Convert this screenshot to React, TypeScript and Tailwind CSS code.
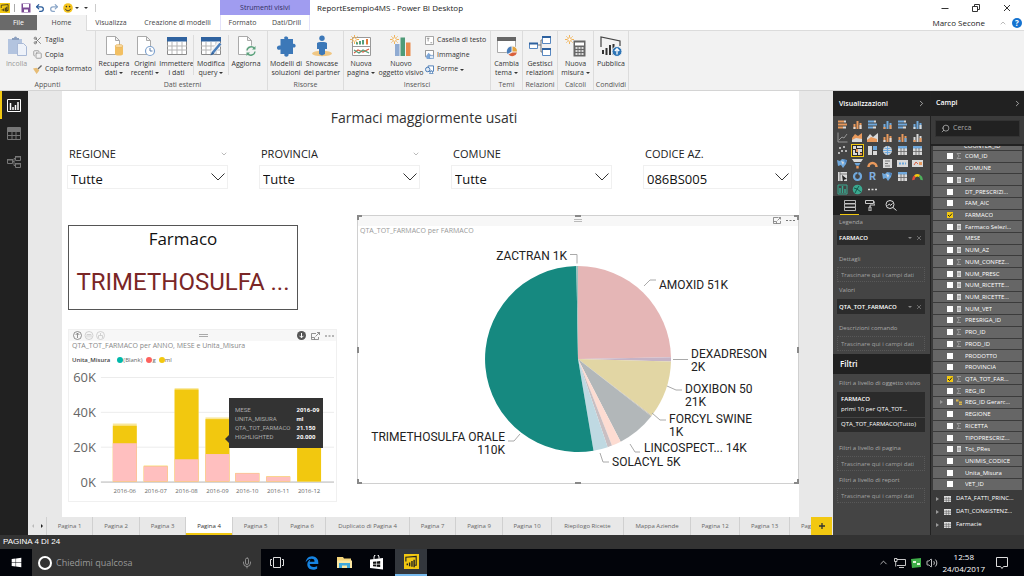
import React from "react";
import {
  ChevronDown,
  ChevronRight,
  ChevronUp,
  Copy,
  Mic,
  Redo2,
  Scissors,
  Search,
  Undo2,
  Volume2,
} from "lucide-react";
import { FaWindows } from "react-icons/fa";
import { FaEdgeLegacy } from "react-icons/fa6";

const BLUE = "#4a7ebb";

/* ---------- Ribbon icons ---------- */

function Ico({ children, className = "h-[22px] w-[22px]", box = "0 0 22 22" }: { children: React.ReactNode; className?: string; box?: string }) {
  return (
    <svg viewBox={box} className={`${className} shrink-0`} fill="none" aria-hidden="true">
      {children}
    </svg>
  );
}

const page = <path d="M3.5 1.500h9l4 4v14h-13z M12.500 1.500v4h4" fill="#fff" stroke="#aaa" />;
const sun = (
  <g stroke="#f0b45c" strokeWidth="1">
    <circle cx="4.500" cy="4.500" r="1.800" fill="#fff" />
    <path d="M4.500 0v2M4.500 7v2M0 4.500h2M7 4.500h2M1.400 1.400l1.200 1.200M6.400 6.400l1.200 1.200M1.400 7.600l1.200-1.200M6.400 2.600l1.200-1.200" />
  </g>
);

const icons = {
  paste: (
    <Ico>
      <path d="M2 4h14v15H2z" fill="#b3c4df" />
      <path d="M6 5V3h2a1.500 1.500 0 013 0h2v2z" fill="#8b9fbe" />
      <path d="M11.500 8.500h6l3 3v9h-9z" fill="#eef2f9" stroke="#a9b9d6" />
    </Ico>
  ),
  getData: (
    <Ico>
      {page}
      <path d="M12 11v8c0 2 8 2 8 0v-8z" fill="#f2bf62" />
      <ellipse cx="16" cy="11" rx="4" ry="1.600" fill="#f8d9a0" stroke="#dfa544" strokeWidth=".5" />
    </Ico>
  ),
  recent: (
    <Ico>
      {page}
      <circle cx="16" cy="16" r="4.500" fill="#fff" stroke="#7fa3cf" strokeWidth="1.200" />
      <path d="M16 13v3h2.500" stroke="#5b7fae" />
    </Ico>
  ),
  table: (
    <Ico>
      <path d="M1.500 2.500h19v17h-19z" fill="#fff" stroke="#8b8b8b" />
      <path d="M1 2h20v4.500H1z" fill="#2f629f" />
      <path d="M1 11h20M1 15h20M6 7v12M11 7v12M16 7v12" stroke="#b5b5b5" />
    </Ico>
  ),
  query: (
    <Ico>
      <path d="M1.500 2.500h19v17h-19z" fill="#fff" stroke="#8b8b8b" />
      <path d="M1 2h20v4.500H1z" fill="#2f629f" />
      <path d="M1 11h20M1 15h20M6 7v12M11 7v12M16 7v12" stroke="#b5b5b5" />
      <path d="M20 8l-8 10" stroke="#f2f2f2" strokeWidth="5" />
      <path d="M20.500 8.500l-7.500 9" stroke={BLUE} strokeWidth="2.600" />
      <path d="M12 16.500l-1.500 4 4-2z" fill="#2f629f" />
    </Ico>
  ),
  refresh: (
    <Ico>
      {page}
      <circle cx="16" cy="16" r="5.500" fill="#f2f2f2" />
      <path d="M12 15.500a4.200 4.200 0 017.500-2M20 16.500a4.200 4.200 0 01-7.500 2" stroke="#5ba27c" strokeWidth="1.400" />
      <path d="M20.500 11v3.500H17zM11.500 21v-3.500H15z" fill="#5ba27c" />
    </Ico>
  ),
  puzzle: (
    <Ico>
      <path
        d="M5.500 4h4C7.500.500 14.500.500 13 4h5v5c3-1.500 4 4.500 0 3.500V19h-4.500c1 3.500-5.500 3.500-4 0h-4v-4.500C1 16.500.500 9.500 5.500 10.500z"
        fill="#3c78b8"
      />
    </Ico>
  ),
  partner: (
    <Ico>
      <ellipse cx="11" cy="18.500" rx="10" ry="2.800" fill="#f0c784" />
      <circle cx="11" cy="3.200" r="2.700" fill="#3c78b8" />
      <path d="M6 8c0-1.500 10-1.500 10 0v6h-2v5l-3 1.500L8 19v-5H6z" fill="#3c78b8" />
    </Ico>
  ),
  newPage: (
    <Ico>
      <path d="M2.500 2.500h18v18h-18z" fill="#fff" stroke="#999" />
      <path d="M2.500 11.500h18" stroke="#999" />
      <path d="M7 9.500V7M10 9.500V6M13 9.500V5" stroke="#55a07c" strokeWidth="2" />
      <path d="M17 9.500V4" stroke="#e07b39" strokeWidth="2" />
      <path d="M4 18l4-3 5 2 6-3" stroke="#d95f43" strokeWidth="1.300" />
      <path d="M4 15l5 3 4-3 6 3" stroke="#55a07c" strokeWidth="1.300" />
      {sun}
    </Ico>
  ),
  newVisual: (
    <Ico>
      <path d="M5 9h4.500v12H5z" fill="#8fabd2" />
      <path d="M10.500 2.500H15V21h-4.500z" fill="#4f9b78" />
      <path d="M16 7.500h4.500V21H16z" fill="#ea8b4c" />
      {sun}
    </Ico>
  ),
  theme: (
    <Ico>
      <path d="M1.500 2.500h18v15h-18z" fill="#fff" stroke="#aaa" />
      <path d="M1 2h19v4H1z" fill="#666" />
      <circle cx="16" cy="16" r="5.500" fill="#f2f2f2" />
      <path d="M15.500 11.500v5l-4 2.500a5 5 0 014-7.500z" fill={BLUE} />
      <path d="M16.500 11.500a5 5 0 014.500 5h-4.500z" fill="#e5a43d" />
      <path d="M16.500 17.500H21a5 5 0 01-8.500 2z" fill="#d9603b" />
    </Ico>
  ),
  relations: (
    <Ico>
      <path d="M8 10h4M12 5v12M12 5h3M12 17h3" stroke="#777" />
      <g fill="#fff" stroke="#5787c0">
        <path d="M.500 8.500h8v5h-8zM13.500 1.500h8v7h-8zM13.500 13.500h8v7h-8z" />
      </g>
      <path d="M0 7.500h9v2H0zM13 1h9v2h-9zM13 13h9v2h-9z" fill="#2f629f" />
    </Ico>
  ),
  measure: (
    <Ico>
      <path d="M8.500 5.500h12v16h-12z" fill="#666" />
      <path d="M10 7.500h9v3h-9z" fill="#fff" />
      <path d="M10.500 13h8M10.500 16h8M10.500 19h8" stroke="#fff" strokeWidth="1.500" strokeDasharray="2 1" />
      {sun}
    </Ico>
  ),
  publish: (
    <Ico>
      <path d="M1 12V2l19 4v5" stroke="#444" strokeWidth="1.200" />
      <path d="M3 19v-4M6.500 20v-7M10 20V10M13.500 20V9" stroke="#333" strokeWidth="2" />
      <circle cx="17" cy="16.500" r="5" fill="#2e75b6" stroke="#f2f2f2" />
      <path d="M17 19.500v-5M14.800 16l2.200-2.300 2.200 2.300" stroke="#fff" strokeWidth="1.300" />
    </Ico>
  ),
};

const small = "h-[9px] w-[9px]";
const smallIcons = {
  format: (
    <Ico className={small} box="0 0 10 10">
      <path d="M0 4l4-1 3 3-3 4z" fill="#e7bd76" />
      <path d="M5 4l4-4 1 1-4 4z" fill="#666" />
    </Ico>
  ),
  textbox: (
    <Ico className={small} box="0 0 10 10">
      <path d="M.500.500h9v9h-9z" fill="#fff" stroke="#999" />
      <path d="M2 2.500h3M3.500 2.500V6M6 7.500h2" stroke="#777" strokeWidth=".8" />
    </Ico>
  ),
  image: (
    <Ico className={small} box="0 0 10 10">
      <path d="M.500.500h9v7h-9z" fill="#fff" stroke="#888" />
      <path d="M1 7l3-4 3 3v4H2z" fill="#7ea7d8" />
      <path d="M5 6h4.500v3.500H5z" fill="#dfe9f5" stroke="#5d8ac0" strokeWidth=".7" />
    </Ico>
  ),
  shapes: (
    <Ico className={small} box="0 0 10 10">
      <path d="M3.500 1h6v6h-6z" fill="#fff" stroke="#3f73b0" />
      <circle cx="3" cy="5" r="2.500" fill="#dfe9f5" stroke="#3f73b0" />
      <path d="M5 9.500l2-3.500 2 3.500z" fill="#fff" stroke="#3f73b0" strokeWidth=".8" />
    </Ico>
  ),
};

function Caret() {
  return <span className="ml-[2px] inline-block border-x-2 border-t-2 border-x-transparent border-t-[#333] align-middle" />;
}

function BigButton({ icon, a, b, caret, className, muted }: { icon: React.ReactNode; a: string; b?: string; caret?: boolean; className: string; muted?: boolean }) {
  return (
    <button className={`flex shrink-0 flex-col items-center whitespace-nowrap pt-[4px] leading-[9px] ${muted ? "text-[#999]" : "text-[#333]"} ${className}`}>
      {icon}
      <span className="pt-[2px]">{a}</span>
      {b && (
        <span>
          {b}
          {caret && <Caret />}
        </span>
      )}
    </button>
  );
}

function Group({ label, className, children }: { label: string; className: string; children: React.ReactNode }) {
  return (
    <section className={`flex shrink-0 flex-col border-r border-[#dcdcdc] ${className}`}>
      <div className="flex flex-1">{children}</div>
      <div className="h-[11px] text-center leading-[11px] text-[#555]">{label}</div>
    </section>
  );
}

function SmallButton({ icon, children, caret }: { icon: React.ReactNode; children: string; caret?: boolean }) {
  return (
    <button className="flex items-center gap-[3px] whitespace-nowrap text-[#333]">
      {icon}
      <span>
        {children}
        {caret && <Caret />}
      </span>
    </button>
  );
}

function PowerBi({ className }: { className: string }) {
  return (
    <svg viewBox="0 0 16 16" className={className} fill="none" aria-hidden="true">
      <path d="M0 0h16v16H0z" fill="#f2c811" />
      <path d="M2 8V3.500l11-1V12h-2" stroke="#222" strokeWidth="1.200" />
      <path d="M3.500 12v-2M6 13v-4M8.500 13.500V7.500M10.800 14V6" stroke="#222" strokeWidth="1.500" />
    </svg>
  );
}

function TitleBar() {
  return (
    <header className="flex h-[15px] shrink-0 items-stretch bg-white">
      <div className="flex w-[220px] shrink-0 items-center">
        <PowerBi className="h-[10px] w-[10px]" />
        <span className="ml-1 h-2 w-px bg-[#aaa]" />
        <button aria-label="Salva" className="ml-[6px]">
          <svg viewBox="0 0 10 10" className="h-[10px] w-[10px]">
            <path d="M.500.500h9v9h-9z" fill="#7a4a94" />
            <path d="M2 1h6v3.500H2zM3 6.500h4V9H3z" fill="#fff" />
          </svg>
        </button>
        <button aria-label="Annulla" className="ml-1">
          <Undo2 className="h-[10px] w-[10px] text-[#2b5d9b]" strokeWidth={3} />
        </button>
        <button aria-label="Ripeti" className="ml-1">
          <Redo2 className="h-[10px] w-[10px] text-[#8ba6c8]" strokeWidth={3} />
        </button>
        <button aria-label="Commenti" className="ml-1 flex items-center">
          <svg viewBox="0 0 10 10" className="h-[10px] w-[10px]">
            <circle cx="5" cy="5" r="4.800" fill="#f5c41c" />
            <circle cx="3.400" cy="3.600" r=".8" fill="#333" />
            <circle cx="6.600" cy="3.600" r=".8" fill="#333" />
            <path d="M2.300 5.800c1 2.600 4.400 2.600 5.400 0" stroke="#333" fill="none" />
          </svg>
          <Caret />
        </button>
        <button aria-label="Personalizza" className="ml-[3px] flex items-center">
          <Caret />
        </button>
        <span className="ml-[7px] h-2 w-px bg-[#ccc]" />
      </div>
      <div className="w-[90px] shrink-0 bg-[#a09cf0] text-center leading-[15px] text-[#33305e]">Strumenti visivi</div>
      <h1 className="flex-1 pl-[7px] text-[8px] leading-[15px] text-[#222]">ReportEsempio4MS - Power BI Desktop</h1>
      <div className="flex items-center gap-[23px] pr-[13px] text-[#333]">
        <button aria-label="Riduci">
          <svg viewBox="0 0 8 8" className="h-2 w-2"><path d="M.500 4.500h7" stroke="currentColor" /></svg>
        </button>
        <button aria-label="Ripristina">
          <svg viewBox="0 0 8 8" className="h-2 w-2" fill="none"><path d="M.500 2.500h5v5h-5zM2.500 2.500v-2h5v5h-2" stroke="currentColor" /></svg>
        </button>
        <button aria-label="Chiudi">
          <svg viewBox="0 0 8 8" className="h-2 w-2"><path d="M1 1l6 6M7 1l-6 6" stroke="currentColor" /></svg>
        </button>
      </div>
    </header>
  );
}

function RibbonTabs() {
  return (
    <nav className="flex h-[16px] shrink-0 border-b border-[#dcdcdc] bg-white text-center leading-[16px] text-[#444]">
      <button className="w-[37px] bg-[#6a6a6a] text-white">File</button>
      <button className="-mb-px w-[50px] border-r border-[#dcdcdc] bg-[#f2f2f2]">Home</button>
      <button className="w-[48px]">Visualizza</button>
      <button className="w-[85px]">Creazione di modelli</button>
      <button className="w-[44px] border-l border-[#e4e2fa]">Formato</button>
      <button className="w-[46px] border-r border-[#e4e2fa]">Dati/Drill</button>
      <div className="flex flex-1 items-center justify-end pr-[2px]">
        <span className="text-[8px] text-[#222]">Marco Secone</span>
        <button aria-label="Comprimi barra" className="ml-[14px]">
          <ChevronUp className="h-[8px] w-[8px] text-[#999]" />
        </button>
        <button aria-label="Guida" className="ml-[5px] h-[10px] w-[10px] rounded-full bg-[#1573d0] text-[8px] font-bold leading-[10px] text-white">
          ?
        </button>
      </div>
    </nav>
  );
}

function Ribbon() {
  return (
    <div className="flex h-[60px] shrink-0 overflow-hidden border-b border-[#d4d4d4] bg-[#f2f2f2]">
      <Group label="Appunti" className="w-[96px]">
        <BigButton icon={icons.paste} a="Incolla" className="w-[33px]" muted />
        <div className="flex flex-col justify-around py-[2px]">
          <SmallButton icon={<Scissors className="h-[9px] w-[9px] text-[#666]" />}>Taglia</SmallButton>
          <SmallButton icon={<Copy className="h-[9px] w-[9px] text-[#888]" />}>Copia</SmallButton>
          <SmallButton icon={smallIcons.format}>Copia formato</SmallButton>
        </div>
      </Group>
      <Group label="Dati esterni" className="w-[172px] pl-[2px]">
        <BigButton icon={icons.getData} a="Recupera" b="dati" caret className="w-[32px]" />
        <BigButton icon={icons.recent} a="Origini" b="recenti" caret className="w-[30px]" />
        <BigButton icon={icons.table} a="Immettere" b="i dati" className="w-[33px]" />
        <span className="my-1 w-px bg-[#dcdcdc]" />
        <BigButton icon={icons.query} a="Modifica" b="query" caret className="w-[34px]" />
        <span className="my-1 w-px bg-[#dcdcdc]" />
        <BigButton icon={icons.refresh} a="Aggiorna" className="w-[34px]" />
      </Group>
      <Group label="Risorse" className="w-[76px]">
        <BigButton icon={icons.puzzle} a="Modelli di" b="soluzioni" className="w-[36px]" />
        <BigButton icon={icons.partner} a="Showcase" b="dei partner" className="w-[36px]" />
      </Group>
      <Group label="Inserisci" className="w-[147px]">
        <BigButton icon={icons.newPage} a="Nuova" b="pagina" caret className="w-[34px]" />
        <BigButton icon={icons.newVisual} a="Nuovo" b="oggetto visivo" className="w-[46px]" />
        <div className="flex flex-col justify-around py-[2px] pl-[1px]">
          <SmallButton icon={smallIcons.textbox}>Casella di testo</SmallButton>
          <SmallButton icon={smallIcons.image}>Immagine</SmallButton>
          <SmallButton icon={smallIcons.shapes} caret>Forme</SmallButton>
        </div>
      </Group>
      <Group label="Temi" className="w-[32px]">
        <BigButton icon={icons.theme} a="Cambia" b="tema" caret className="w-[31px]" />
      </Group>
      <Group label="Relazioni" className="w-[35px]">
        <BigButton icon={icons.relations} a="Gestisci" b="relazioni" className="w-[34px]" />
      </Group>
      <Group label="Calcoli" className="w-[36px]">
        <BigButton icon={icons.measure} a="Nuova" b="misura" caret className="w-[35px]" />
      </Group>
      <Group label="Condividi" className="w-[35px]">
        <BigButton icon={icons.publish} a="Pubblica" className="w-[34px]" />
      </Group>
    </div>
  );
}

/* ---------- Left rail ---------- */

function Rail() {
  return (
    <nav className="flex w-7 shrink-0 flex-col bg-[#212121]">
      <button aria-label="Report" className="flex h-7 items-center justify-center border-l-2 border-[#f2c811] pr-[2px] text-white">
        <svg viewBox="0 0 14 13" className="h-[13px] w-[14px]" fill="none">
          <path d="M.500.500h13v12h-13z" stroke="currentColor" />
          <path d="M3.500 11V4M6 11V8M8.500 11V6M11 11V3" stroke="currentColor" strokeWidth="1.500" />
        </svg>
      </button>
      <button aria-label="Dati" className="flex h-7 items-center justify-center text-[#777]">
        <svg viewBox="0 0 14 13" className="h-[13px] w-[14px]" fill="none">
          <path d="M.500.500h13v12h-13zM1 4.500h12M1 8.500h12M5 4v8M9 4v8" stroke="currentColor" />
          <path d="M1 1h12v3H1z" fill="currentColor" />
        </svg>
      </button>
      <button aria-label="Relazioni" className="flex h-7 items-center justify-center text-[#777]">
        <svg viewBox="0 0 14 13" className="h-[13px] w-[14px]" fill="none">
          <path d="M.500 4.500h5v4h-5zM8.500 1.500h5v4h-5zM8.500 8.500h5v4h-5zM5.500 6.500H7V3.500h1.500M7 6v4.500h1.500" stroke="currentColor" />
          <path d="M0 4h6v1.500H0zM8 1h6v1.500H8zM8 8h6v1.500H8z" fill="currentColor" />
        </svg>
      </button>
    </nav>
  );
}

/* ---------- Report page ---------- */

function Slicer({ id, label, value, mark }: { id: string; label: string; value: string; mark?: boolean }) {
  return (
    <div>
      <div className="flex h-[22px] items-center justify-between pl-[2px] text-[#222]">
        <label htmlFor={id} className="text-[11px]">{label}</label>
        {mark && <ChevronDown className="h-2 w-2 text-[#999]" />}
      </div>
      <div className="relative">
        <select
          id={id}
          className="block h-[24px] w-full appearance-none border border-[#f0f0f0] bg-white pl-[3px] pt-[4px] text-[13px] text-[#111]"
        >
          <option>{value}</option>
        </select>
        <svg viewBox="0 0 14 8" className="pointer-events-none absolute right-[3px] top-[8px] h-[8px] w-[14px]" fill="none">
          <path d="M.500.500L7 7 13.500.500" stroke="#333" />
        </svg>
      </div>
    </div>
  );
}

function FocusIcon() {
  return (
    <svg viewBox="0 0 9 8" className="h-2 w-[9px]" fill="none">
      <path d="M5 1.500H.500v6h7V5M.500 5.500h3v2M4.500 4.500l4-4M6 .500h2.500V3" stroke="#777" strokeWidth=".8" />
    </svg>
  );
}

function Dots() {
  return (
    <svg viewBox="0 0 9 2" className="h-[2px] w-[9px]">
      <path d="M0 1h2M3.500 1h2M7 1h2" stroke="#777" strokeWidth="1.200" />
    </svg>
  );
}

const AXIS = 113;
const PX_PER_K = 1.75;
const bars = [
  { m: "2016-06", x: 44, g: 22, ml: 32, rest: 33.3 },
  { m: "2016-07", x: 75, g: 8.8, ml: 8.8, rest: 9.3 },
  { m: "2016-08", x: 106, g: 12.8, ml: 52.8, rest: 53.6 },
  { m: "2016-09", x: 137, g: 15.8, ml: 35.8, rest: 36.8 },
  { m: "2016-10", x: 167, g: 4.8, ml: 4.8, rest: 5 },
  { m: "2016-11", x: 198, g: 2.8, ml: 2.8, rest: 3.1 },
  { m: "2016-12", x: 229, g: 0, ml: 28, rest: 29 },
];

function ColumnChart() {
  return (
    <svg viewBox="0 0 268 132" className="block w-full">
      {[60, 40, 20, 0].map((k) => (
        <g key={k}>
          <path d={`M32 ${AXIS - k * PX_PER_K + 0.5}H266`} stroke={k ? "#ececec" : "#b5b5b5"} />
          <text x="27" y={AXIS - k * PX_PER_K + 5} textAnchor="end" fontSize="13" fill="#666">
            {k}K
          </text>
        </g>
      ))}
      {bars.map((b) => (
        <g key={b.m}>
          <rect x={b.x} width="24" y={AXIS - b.rest * PX_PER_K} height={b.rest * PX_PER_K} fill="#f9e79b" />
          <rect x={b.x} width="24" y={AXIS - b.ml * PX_PER_K} height={b.ml * PX_PER_K} fill="#f2c80f" />
          <rect x={b.x} width="24" y={AXIS - b.g * PX_PER_K} height={b.g * PX_PER_K} fill="#ffbfbf" />
          <text x={b.x + 12} y="124" textAnchor="middle" fontSize="6" fill="#666">
            {b.m}
          </text>
        </g>
      ))}
    </svg>
  );
}

const tip = [
  ["MESE", "2016-09"],
  ["UNITA_MISURA", "ml"],
  ["QTA_TOT_FARMACO", "21.150"],
  ["HIGHLIGHTED", "20.000"],
];

function ColumnPanel() {
  return (
    <section className="relative border border-[#f0f0f0] bg-white">
      <div className="flex h-[11px] items-center bg-[#f7f7f7] pl-1 pr-[2px]">
        <div className="flex flex-1 gap-[3px]">
          <svg viewBox="0 0 32 9" className="h-[9px] w-8" fill="none">
            <circle cx="4.500" cy="4.500" r="4" stroke="#777" strokeWidth=".8" />
            <path d="M4.500 7V2.200M2.700 4l1.800-2 1.800 2" stroke="#777" strokeWidth=".8" />
            <g stroke="#c8c8c8" strokeWidth=".8">
              <circle cx="16" cy="4.500" r="4" />
              <path d="M14 3.500v3M16 3.500v3M18 3.500v3M14 3.500h4" />
              <circle cx="27.500" cy="4.500" r="4" />
              <path d="M27.500 2v2.500M25.500 7V4.500h4V7" />
            </g>
          </svg>
        </div>
        <span className="h-[3px] w-[9px] border-y border-[#aaa]" />
        <div className="flex flex-1 items-center justify-end gap-[5px]">
          <svg viewBox="0 0 9 9" className="h-[9px] w-[9px]" fill="none">
            <circle cx="4.500" cy="4.500" r="4.500" fill="#555" />
            <path d="M4.500 2v4.500M2.500 4.800l2 2 2-2" stroke="#fff" />
          </svg>
          <FocusIcon />
          <Dots />
        </div>
      </div>
      <h3 className="h-[10px] pl-[3px] text-[7px] leading-[10px] text-[#888]">QTA_TOT_FARMACO per ANNO, MESE e Unita_Misura</h3>
      <div className="flex h-[18px] items-center pl-[3px] text-[6px] text-[#666]">
        <span className="mr-[7px] font-semibold text-[#444]">Unita_Misura</span>
        <span className="h-[6px] w-[6px] rounded-full bg-[#01b8aa]" />
        <span className="mr-1">(Blank)</span>
        <span className="h-[6px] w-[6px] rounded-full bg-[#fd625e]" />
        <span className="mr-[3px]">g</span>
        <span className="h-[6px] w-[6px] rounded-full bg-[#f2c80f]" />
        <span>ml</span>
      </div>
      <ColumnChart />
      <div
        role="tooltip"
        className="absolute left-[160px] top-[68px] grid w-[94px] grid-cols-[1fr_27px] gap-x-[6px] bg-[#333] py-[7px] pl-[6px] pr-[6px] font-['Roboto',sans-serif] text-[6px] leading-[9px]"
      >
        {tip.map(([k, v]) => (
          <React.Fragment key={k}>
            <span className="whitespace-nowrap text-[#aaa]">{k}</span>
            <span className="whitespace-nowrap font-bold text-white">{v}</span>
          </React.Fragment>
        ))}
        <span className="absolute -left-[4px] top-[37px] border-y-4 border-r-4 border-y-transparent border-r-[#333]" />
      </div>
    </section>
  );
}

const CX = 221;
const CY = 144;
const R = 93;
const slices: [number, number, string][] = [
  [0, 88.9, "#e5b6b6"],
  [88.9, 91.6, "#c5b3c6"],
  [91.6, 127.5, "#e2d6a4"],
  [127.5, 128, "#c9c0b0"],
  [128, 152.7, "#b2b7b9"],
  [152.7, 158.6, "#fddcd2"],
  [158.6, 161.4, "#c9bfc2"],
  [161.4, 170.4, "#bfd9e2"],
  [170.4, 359, "#168980"],
  [359, 360, "#9cc0bd"],
];

function arc(from: number, to: number) {
  const p = (a: number) => {
    const r = (a * Math.PI) / 180;
    return `${(CX + R * Math.sin(r)).toFixed(2)} ${(CY - R * Math.cos(r)).toFixed(2)}`;
  };
  return `M${CX} ${CY}L${p(from)}A${R} ${R} 0 ${to - from > 180 ? 1 : 0} 1 ${p(to)}Z`;
}

const pieLabels: { x: number; y: number; t: string; end?: boolean }[] = [
  { x: 210, y: 45, t: "ZACTRAN 1K", end: true },
  { x: 302, y: 74, t: "AMOXID 51K" },
  { x: 334, y: 143, t: "DEXADRESON" },
  { x: 334, y: 156, t: "2K" },
  { x: 328, y: 178, t: "DOXIBON 50" },
  { x: 328, y: 191, t: "21K" },
  { x: 312, y: 208, t: "FORCYL SWINE" },
  { x: 312, y: 221, t: "1K" },
  { x: 287, y: 237, t: "LINCOSPECT... 14K" },
  { x: 255, y: 251, t: "SOLACYL 5K" },
  { x: 148, y: 226, t: "TRIMETHOSULFA ORALE", end: true },
  { x: 148, y: 239, t: "110K", end: true },
];

function PiePanel() {
  return (
    <section className="min-w-0 flex-1 self-start">
      <svg viewBox="0 0 442 269" className="block w-full">
        <path d="M.5.5h441v268H.5z" fill="#fff" stroke="#d0d0d0" />
        <path d="M1 1h440v10H1z" fill="#f7f7f7" />
        <g stroke="#888" strokeWidth="2" fill="none">
          <path d="M1 5V1h4M437 1h4v4M1 264v4h4M437 268h4v-4M218 1h6M218 268h6M1 132v6M441 132v6" />
        </g>
        <path d="M217 4.500h8M217 6.500h8" stroke="#aaa" strokeWidth=".8" />
        <g transform="translate(416 1)">
          <path d="M5 1.500H.500v6h7V5M.500 5.500h3v2M4.500 4.500l3-3M5.500 1.500h2V3.500" stroke="#777" strokeWidth=".8" fill="none" />
          <path d="M13 4.500h2M16.500 4.500h2M20 4.500h2" stroke="#777" strokeWidth="1.200" />
        </g>
        <text x="3" y="18" fontSize="7" fill="#999">QTA_TOT_FARMACO per FARMACO</text>
        {slices.map(([a, b, c]) => (
          <path key={a} d={arc(a, b)} fill={c} />
        ))}
        <g stroke="#aaa" fill="none">
          <path d="M213 39.500h7v9M287 71l6-6h6M316 144.500h15M310 171l9 4h6M295 198l8 7h6M273 229l5 8h5M243 238l3 9h6M163 219l-6 7h-6" />
        </g>
        <g fill="#222" fontFamily="Roboto, sans-serif" fontSize="12">
          {pieLabels.map((l) => (
            <text key={l.t} x={l.x} y={l.y} textAnchor={l.end ? "end" : "start"}>
              {l.t}
            </text>
          ))}
        </g>
      </svg>
    </section>
  );
}

const pages = [
  ["Pagina 1", "w-[46px]"],
  ["Pagina 2", "w-[47px]"],
  ["Pagina 3", "w-[46px]"],
  ["Pagina 4", "w-[47px]"],
  ["Pagina 5", "w-[46px]"],
  ["Pagina 6", "w-[47px]"],
  ["Duplicato di Pagina 4", "w-[84px]"],
  ["Pagina 7", "w-[46px]"],
  ["Pagina 9", "w-[47px]"],
  ["Pagina 10", "w-[49px]"],
  ["Riepilogo Ricette", "w-[72px]"],
  ["Mappa Aziende", "w-[67px]"],
  ["Pagina 12", "w-[49px]"],
  ["Pagina 13", "w-[50px]"],
  ["Pagina 14", "w-[50px]"],
];

function Report() {
  return (
    <main className="flex min-w-0 flex-1 flex-col bg-[#e8e8e8]">
      <div className="ml-[34px] mr-[34px] flex-1 overflow-hidden bg-white">
        <h2 className="flex h-[52px] items-center justify-center pr-[13px] text-[14px] text-[#333]">Farmaci maggiormente usati</h2>
        <div className="grid grid-cols-[161fr_161fr_161fr_149fr] gap-x-[31px] pl-[5px] pr-[7px]">
          <Slicer id="regione" label="REGIONE" value="Tutte" mark />
          <Slicer id="provincia" label="PROVINCIA" value="Tutte" mark />
          <Slicer id="comune" label="COMUNE" value="Tutte" />
          <Slicer id="codice" label="CODICE AZ." value="086BS005" />
        </div>
        <div className="mt-[26px] flex gap-5 pl-[6px]">
          <div className="flex w-[269px] shrink-0 flex-col gap-[19px] pt-[10px]">
            <section className="flex h-[85px] w-[230px] flex-col items-center border border-[#555]">
              <h3 className="pt-[1px] text-[17px] leading-6 text-[#111]">Farmaco</h3>
              <p className="pt-[15px] font-['Roboto',sans-serif] text-[24px] leading-8 text-[#7a2626]">TRIMETHOSULFA ...</p>
            </section>
            <ColumnPanel />
          </div>
          <PiePanel />
        </div>
      </div>
      <div className="flex h-[18px] shrink-0 text-[6px] leading-[18px] text-[#666]">
        <div className="flex w-[19px] shrink-0 items-center justify-around border-r border-[#d0d0d0]">
          <button aria-label="Precedente" className="border-y-2 border-r-2 border-y-transparent border-r-[#bbb]" />
          <button aria-label="Successiva" className="border-y-2 border-l-2 border-y-transparent border-l-[#222]" />
        </div>
        <div className="flex min-w-0 flex-1 overflow-hidden">
          {pages.map(([p, w]) => (
            <button
              key={p}
              className={`shrink-0 whitespace-nowrap border-r border-[#d0d0d0] ${w} ${p === "Pagina 4" ? "bg-white text-[#333] shadow-[inset_0_-2px_0_#f2c811]" : ""}`}
            >
              {p}
            </button>
          ))}
        </div>
        <button aria-label="Nuova pagina" className="mr-[1px] flex w-[21px] shrink-0 items-center justify-center bg-[#f2c811]">
          <svg viewBox="0 0 6 6" className="h-[6px] w-[6px]"><path d="M3 0v6M0 3h6" stroke="#333" strokeWidth="1.300" /></svg>
        </button>
      </div>
    </main>
  );
}

/* ---------- Visualizations pane ---------- */

const O = "#e8995c";
const B = "#6fa8dc";
const W = "#d9d9d9";
const G = "#3aa88f";

const hbars = (a: string, b: string) => (
  <>
    <path d="M1 2.500h6M1 5.500h9M1 8.500h5" stroke={a} strokeWidth="2" />
    <path d="M7 2.500h2M6 8.500h3" stroke={b} strokeWidth="2" />
  </>
);
const vbars = (a: string, b: string) => (
  <>
    <path d="M2.500 10V5M5.500 10V2M8.500 10V4" stroke={a} strokeWidth="2" />
    <path d="M2.500 10V8M8.500 10V6" stroke={b} strokeWidth="2" />
  </>
);
const grid = (top: string) => (
  <>
    <path d="M1 1h9v9H1z" fill={W} />
    <path d="M1 1h9v2.500H1z" fill={top} />
    <path d="M1 6.500h9M4 3v7M7 3v7" stroke="#666" strokeWidth=".8" />
  </>
);
const map = (
  <>
    <path d="M0 2l3 1 2-2 5 1-1 4-3 4-2-3-3 1z" fill={B} />
    <path d="M4 3l3 1-1 3z" fill={W} />
    <path d="M7 1l3 2-2 2z" fill="#4a7ebb" />
  </>
);
const filled = (
  <>
    <path d="M1 1h3v3H1zM5 1h5v2H5zM1 5h2v3h2v2H1zM6 4h4v3H8v3H6z" fill={W} />
    <path d="M4 4h2v3H4zM8 8h2v2H8z" fill={O} />
  </>
);
const line = <path d="M1 .5v9.500h9.500M2 8l3-3 2 1 3-4" stroke="#aaa" fill="none" strokeWidth=".8" />;

const viz: React.ReactNode[] = [
  hbars(O, W), vbars(O, W), hbars(B, W), vbars(B, O), hbars(B, W), vbars(B, W),
  line,
  <><path d="M0 10V6l3-4 3 2 4-3v9z" fill={O} /><path d="M0 10V8l4-2 6 1v3z" fill={W} /></>,
  <><path d="M0 10V6l3-4 3 3 5-4v9z" fill={W} /><path d="M0 10V8l4-3 6 2v3z" fill={O} /></>,
  vbars(O, W), vbars(O, B), vbars(W, O),
  <><g fill={W}><circle cx="3" cy="3" r="1" /><circle cx="7" cy="2" r="1" /><circle cx="5" cy="6" r="1" /><circle cx="9" cy="6" r="1" /><circle cx="2" cy="8" r="1" /></g></>,
  filled,
  <><path d="M1 1h4v9H1z" fill={W} /><path d="M6 1h4v4H6z" fill={B} /><path d="M6 6h4v4H6z" fill={W} /></>,
  <><circle cx="5.500" cy="5.500" r="4.500" fill={W} /><path d="M1 5.500h9M5.500 1v9M2.500 3c2 1 4 1 6 0M2.500 8c2-1 4-1 6 0" stroke={B} strokeWidth="1.200" fill="none" /></>,
  grid(B), grid(B),
  map,
  <><path d="M0 1h11L9 4H2z" fill={W} /><path d="M2.500 5h6L7 7.500H4z" fill={B} /><path d="M4.300 8h2.400v2.500H4.300z" fill={O} /></>,
  <path d="M1.500 9a4 4 0 018 0" fill="none" stroke={O} strokeWidth="2.500" />,
  <><path d="M1 1h9v9H1z" fill={W} /><path d="M3 3h5M3 5.500h3M3 8h5" stroke="#777" /></>,
  <><path d="M0 2h11v7H0z" fill={W} /><path d="M2 5.500h7" stroke={B} strokeWidth="2" strokeDasharray="2 1" /></>,
  <><path d="M0 2h11v7H0z" fill={W} /><path d="M2 7l2-3 2 2" stroke="#d95f43" fill="none" /><path d="M7 4h3v3H7z" fill={O} /></>,
  <><path d="M1 1h9v9H1z" fill={W} /><path d="M3 3h7M3 1v9" stroke="#666" strokeWidth=".8" /><path d="M5 4l5 4-2.500.5L6 11z" fill="#222" /></>,
  <circle cx="5.500" cy="5.500" r="3.500" fill="none" stroke={B} strokeWidth="2.200" strokeDasharray="16 1" />,
  null,
  map, grid(B),
  <><path d="M1.500 9a4 4 0 012-4" fill="none" stroke="#e04b3a" strokeWidth="2.500" /><path d="M3 5.200a4 4 0 014.500-.2" fill="none" stroke="#f2c811" strokeWidth="2.500" /><path d="M7.500 5a4 4 0 012 4" fill="none" stroke="#4db05b" strokeWidth="2.500" /></>,
  <><path d="M1 1h9v9H1z" fill="none" stroke={G} /><path d="M3 9V4M5.500 9V2M8 9V5" stroke={G} strokeWidth="1.500" /></>,
  <><circle cx="5.500" cy="5.500" r="4.800" fill={G} /><path d="M2 4l3 1 2-3M5 5l4 3M3 9l2-4" stroke="#17594c" fill="none" /></>,
  <path d="M1 5.500h2M4.500 5.500h2M8 5.500h2" stroke={W} strokeWidth="1.500" />,
];

function DropField({ children }: { children: string }) {
  return (
    <div className="flex h-[15px] items-center border border-dotted border-[#585858] pl-[3px] text-[#a0a0a0]">
      <span className="truncate">{children}</span>
    </div>
  );
}

function FieldPill({ children }: { children: string }) {
  return (
    <div className="flex h-[15px] items-center bg-[#2b2b2b] pl-[2px] pr-[4px] text-white">
      <span className="min-w-0 flex-1 truncate font-semibold">{children}</span>
      <span className="border-x-2 border-t-2 border-x-transparent border-t-[#888]" />
      <button aria-label="Rimuovi" className="ml-[5px]">
        <svg viewBox="0 0 4 4" className="h-1 w-1"><path d="M0 0l4 4M4 0L0 4" stroke="#888" strokeWidth=".7" /></svg>
      </button>
    </div>
  );
}

function PaneHeader({ title, className }: { title: string; className: string }) {
  return (
    <div className={`flex h-[25px] shrink-0 items-center justify-between bg-[#212121] ${className}`}>
      <h2 className="text-[7px] font-semibold text-white">{title}</h2>
      <button aria-label={`Comprimi ${title}`}>
        <ChevronRight className="h-[9px] w-[9px] text-[#ccc]" />
      </button>
    </div>
  );
}

function VizPane() {
  return (
    <aside className="flex w-[97px] shrink-0 flex-col bg-[#444] text-[6px] leading-[8px] text-[#aaa]">
      <PaneHeader title="Visualizzazioni" className="pl-[6px] pr-1" />
      <div className="grid grid-cols-6 justify-items-center pl-[2px] pr-[5px] pt-[2px]">
        {viz.map((v, i) => (
          <button
            key={i}
            aria-label={`Oggetto visivo ${i + 1}`}
            className={`flex h-[13px] w-[13px] items-center justify-center ${i === 13 ? "border border-[#f2c811] bg-[#2b2b2b]" : ""}`}
          >
            {i === 26 ? (
              <span className="font-['Roboto',sans-serif] text-[11px] font-bold leading-[11px] text-[#7fb0e0]">R</span>
            ) : (
              <svg viewBox="0 0 11 11" className="h-[11px] w-[11px] shrink-0">{v}</svg>
            )}
          </button>
        ))}
      </div>
      <div className="flex h-[19px] shrink-0 items-stretch bg-[#212121] text-[#ddd]">
        <button aria-label="Campi" className="ml-[7px] flex w-[19px] items-center justify-center border-b border-[#f2c811]">
          <svg viewBox="0 0 12 11" className="h-[11px] w-3" fill="none"><path d="M.500.500h11v3H.500zM.500 4h11v3H.500zM.500 7.500h11v3H.500z" stroke="currentColor" strokeWidth=".8" /></svg>
        </button>
        <button aria-label="Formato" className="ml-[6px] flex items-center">
          <svg viewBox="0 0 10 11" className="h-[11px] w-[10px]" fill="none"><path d="M.500.500h8v3h-8zM8.500 2H10v3H5v2M4 7h2v4H4z" stroke="currentColor" strokeWidth=".9" /></svg>
        </button>
        <button aria-label="Analisi" className="ml-[10px] flex items-center">
          <svg viewBox="0 0 12 11" className="h-[11px] w-3" fill="none"><circle cx="5" cy="4.500" r="4" stroke="currentColor" /><path d="M8 7.500l3.500 3M2.500 5.500L4.500 4l1 1.500 2-2" stroke="currentColor" /></svg>
        </button>
      </div>
      <div className="flex flex-col pl-1 pr-[5px] pt-[3px]">
        <p className="h-[12px] pl-[2px]">Legenda</p>
        <FieldPill>FARMACO</FieldPill>
        <p className="h-[22px] pl-[2px] pt-[10px]">Dettagli</p>
        <DropField>Trascinare qui i campi dati</DropField>
        <p className="h-[17px] pl-[2px] pt-[4px]">Valori</p>
        <FieldPill>QTA_TOT_FARMACO</FieldPill>
        <p className="h-[22px] truncate pl-[2px] pt-[10px]">Descrizioni comando</p>
        <DropField>Trascinare qui i campi dati</DropField>
      </div>
      <h2 className="mt-[3px] h-[20px] shrink-0 bg-[#212121] pl-[7px] text-[8px] font-semibold leading-[20px] text-white">Filtri</h2>
      <div className="flex flex-1 flex-col pl-1 pr-[5px]">
        <p className="h-[18px] whitespace-nowrap pl-[2px] pt-[5px]">Filtri a livello di oggetto visivo</p>
        <div className="bg-[#2b2b2b] px-[4px] pb-[3px] pt-[2px] leading-[10px] text-white">
          <p className="font-semibold">FARMACO</p>
          <p className="truncate">primi 10 per QTA_TOT...</p>
        </div>
        <div className="mt-[1px] h-[14px] truncate bg-[#2b2b2b] pl-[4px] leading-[13px] text-white">QTA_TOT_FARMACO(Tutto)</div>
        <p className="h-[24px] pl-[2px] pt-[12px]">Filtri a livello di pagina</p>
        <DropField>Trascinare qui i campi dati</DropField>
        <p className="h-[17px] pl-[2px] pt-[5px]">Filtri a livello di report</p>
        <DropField>Trascinare qui i campi dati</DropField>
      </div>
    </aside>
  );
}

/* ---------- Fields pane ---------- */

type Kind = "" | "sum" | "calc" | "tree";
const fields: [string, Kind][] = [
  ["COM_ID", "sum"],
  ["COMUNE", ""],
  ["Diff", "calc"],
  ["DT_PRESCRIZI...", ""],
  ["FAM_AIC", ""],
  ["FARMACO", ""],
  ["Farmaco Selezi...", "calc"],
  ["MESE", ""],
  ["NUM_AZ", "calc"],
  ["NUM_CONFEZ...", "sum"],
  ["NUM_PRESC", "calc"],
  ["NUM_RICETTE...", "calc"],
  ["NUM_RICETTE...", "calc"],
  ["NUM_VET", "calc"],
  ["PRESRIGA_ID", "sum"],
  ["PRO_ID", "sum"],
  ["PROD_ID", "sum"],
  ["PRODOTTO", ""],
  ["PROVINCIA", ""],
  ["QTA_TOT_FAR...", "sum"],
  ["REG_ID", "sum"],
  ["REG_ID Gerarc...", "tree"],
  ["REGIONE", ""],
  ["RICETTA", "sum"],
  ["TIPOPRESCRIZ...", ""],
  ["Tot_PRes", "calc"],
  ["UNIMIS_CODICE", ""],
  ["Unita_Misura", ""],
  ["VET_ID", ""],
];

function KindIcon({ kind }: { kind: Kind }) {
  return (
    <svg viewBox="0 0 6 6" className="h-[6px] w-[6px] shrink-0" fill="none">
      {kind === "sum" && <path d="M5 .500H1L3.200 3 1 5.500h4" stroke="#aaa" strokeWidth=".8" />}
      {kind === "calc" && (
        <>
          <path d="M1 0h4v6H1z" fill="#ddd" />
          <path d="M1.500 2.200h3M1.500 4h3" stroke="#666" strokeWidth=".6" />
        </>
      )}
      {kind === "tree" && <path d="M0 .500h2.500v2H0zM3 2.500h3v1.500H3zM3 4.500h3V6H3z" fill="#d9b64a" />}
    </svg>
  );
}

function Tri() {
  return <span className="border-y-2 border-l-[3px] border-y-transparent border-l-[#999]" />;
}

function FieldsPane() {
  return (
    <aside className="flex w-[94px] shrink-0 flex-col border-l border-[#222] bg-[#3b3b3b] text-[6px] text-white">
      <PaneHeader title="Campi" className="pl-[5px] pr-[2px]" />
      <div className="px-[4px] pb-[7px] pt-[4px]">
        <label className="flex h-[17px] items-center gap-[3px] border border-[#333] bg-[#212121] px-[5px]">
          <Search className="h-[9px] w-[9px] shrink-0 -scale-x-100 text-[#bbb]" />
          <input aria-label="Cerca" placeholder="Cerca" className="w-full min-w-0 bg-transparent text-[7px] outline-none placeholder:text-[#aaa]" />
        </label>
      </div>
      <div className="h-[2px] shrink-0 bg-[#222]" />
      <div className="flex min-h-0 flex-1 flex-col overflow-hidden pl-[2px] pr-[2px]">
        <div className="flex h-[4px] shrink-0 items-end overflow-hidden bg-[#666] pl-[31px] leading-[8px]">COUNTER_ID</div>
        {fields.map(([name, kind], i) => (
          <label key={i} className="flex min-h-0 flex-1 items-center gap-[3px] border-t border-[#3b3b3b] bg-[#666] leading-[8px]">
            <span className="flex w-[10px] justify-end">{kind === "tree" && <Tri />}</span>
            <span className="grid h-[7px] w-[7px] shrink-0 place-items-center">
              <input
                type="checkbox"
                defaultChecked={name === "FARMACO" || name.startsWith("QTA")}
                className="peer col-start-1 row-start-1 h-[6px] w-[6px] appearance-none bg-white checked:bg-[#f2c811]"
              />
              <svg viewBox="0 0 6 6" className="pointer-events-none invisible col-start-1 row-start-1 h-[6px] w-[6px] peer-checked:visible" fill="none">
                <path d="M1 3l1.500 1.500L5 1.500" stroke="#222" />
              </svg>
            </span>
            <KindIcon kind={kind} />
            <span className="min-w-0 truncate">{name}</span>
          </label>
        ))}
      </div>
      <div className="h-[45px] shrink-0 overflow-hidden pt-[2px]">
        {["DATA_FATTI_PRINC...", "DATI_CONSISTENZ...", "Farmacie", "PR_NTE"].map((t) => (
          <div key={t} className="flex h-[13px] items-center gap-[5px] pl-[5px]">
            <Tri />
            <svg viewBox="0 0 7 6" className="h-[6px] w-[7px] shrink-0">
              <path d="M0 0h7v6H0z" fill="#ddd" />
              <path d="M0 2.300h7M0 4.300h7M2.300 1v5M4.700 1v5" stroke="#555" strokeWidth=".5" />
            </svg>
            <span className="truncate">{t}</span>
          </div>
        ))}
      </div>
    </aside>
  );
}

/* ---------- Taskbar ---------- */

function Taskbar() {
  return (
    <footer className="flex h-[27px] shrink-0 items-stretch bg-[#02040a] text-white">
      <button aria-label="Start" className="flex w-8 items-center justify-center">
        <FaWindows className="h-[11px] w-[11px]" />
      </button>
      <label className="flex w-[229px] items-center bg-[#333] pl-[6px] pr-2">
        <span className="h-[14px] w-[14px] shrink-0 rounded-full border-2 border-white" />
        <input aria-label="Cerca" placeholder="Chiedimi qualcosa" className="min-w-0 flex-1 bg-transparent pl-1 text-[9px] outline-none placeholder:text-[#999]" />
        <Mic className="h-[12px] w-[12px] shrink-0 text-[#aaa]" strokeWidth={1.5} />
      </label>
      <button aria-label="Visualizzazione attività" className="flex w-8 items-center justify-center">
        <svg viewBox="0 0 14 11" className="h-[11px] w-[14px]" fill="none"><path d="M3.500.500h7v10h-7zM2 2.500H.500v6H2M12 2.500h1.500v6H12" stroke="#ddd" /></svg>
      </button>
      <button aria-label="Edge" className="flex w-[38px] items-center justify-center">
        <FaEdgeLegacy className="h-[14px] w-[14px] text-[#1683e0]" />
      </button>
      <button aria-label="Esplora file" className="flex w-[27px] items-center justify-center">
        <svg viewBox="0 0 15 13" className="h-[13px] w-[15px]">
          <path d="M0 1h6l1 1.500h7V12H0z" fill="#f5d67b" />
          <path d="M0 4.500h15V12H0z" fill="#fbe7a2" />
          <path d="M2 12V7h11v5h-3V9.500H5V12z" fill="#3fa9dd" />
        </svg>
      </button>
      <button aria-label="Store" className="flex w-[37px] items-center justify-center">
        <svg viewBox="0 0 15 15" className="h-[15px] w-[15px]">
          <path d="M1 4.500L14 3v11.500L1 13z" fill="#fff" />
          <path d="M5 4V2a2.500 2.500 0 015 0v1.500" stroke="#fff" fill="none" />
          <path d="M4 6.800l3-.3v2.300H4zM7.600 6.400l3.600-.4v2.800H7.600zM4 9.400h3v2.200l-3-.3zM7.600 9.400h3.600v2.700l-3.600-.4z" fill="#111" />
        </svg>
      </button>
      <button aria-label="Power BI Desktop" className="flex w-8 items-center justify-center border-b-2 border-[#76b9ed] bg-[#33373d]">
        <PowerBi className="h-[15px] w-[15px]" />
      </button>
      <div className="flex flex-1 items-center justify-end gap-[5px] pr-[16px]">
        <ChevronUp className="h-[11px] w-[11px]" strokeWidth={1.5} />
        <svg viewBox="0 0 12 10" className="h-[10px] w-3" fill="none"><path d="M3 1.500h8.500v6H3M5 9.500h5M.500.500h2.500v3H.500zM1.700 3.500v5" stroke="#ddd" strokeWidth=".9" /></svg>
        <svg viewBox="0 0 10 10" className="h-[10px] w-[10px]"><path d="M0 1l10-1v9l-9 1z" fill="#3fae49" /><path d="M2 3h3v2H2zM6 5h3v2H6z" fill="#dff5d8" /></svg>
        <Volume2 className="h-[12px] w-[12px]" strokeWidth={1.5} />
        <div className="text-center text-[8px] leading-[12px]">
          <p>12:58</p>
          <p>24/04/2017</p>
        </div>
        <svg viewBox="0 0 12 12" className="ml-[6px] h-3 w-3" fill="none"><path d="M.500.500h11v9H7.500l-1.500 2-1.500-2h-4z" stroke="#ddd" /></svg>
      </div>
    </footer>
  );
}

export default function App() {
  return (
    <div className="flex h-screen flex-col overflow-hidden bg-white font-['Open_Sans',sans-serif] text-[7px]">
      <TitleBar />
      <RibbonTabs />
      <Ribbon />
      <div className="flex min-h-0 flex-1">
        <Rail />
        <Report />
        <VizPane />
        <FieldsPane />
      </div>
      <div className="h-[14px] shrink-0 bg-[#333] pl-[3px] font-['Liberation_Sans',sans-serif] text-[8px] leading-[13px] text-white">PAGINA 4 DI 24</div>
      <Taskbar />
    </div>
  );
}
